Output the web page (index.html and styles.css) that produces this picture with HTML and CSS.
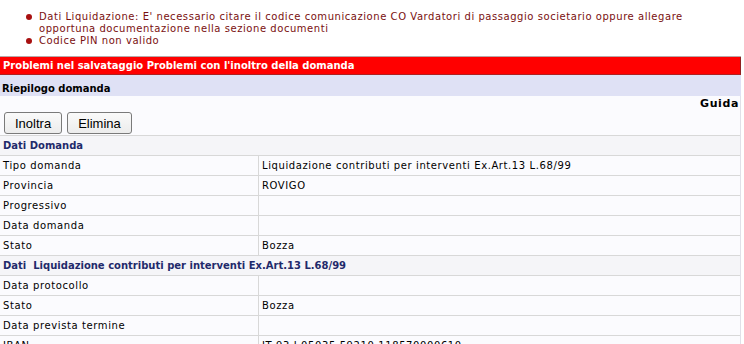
FILE: index.html
```html
<!DOCTYPE html>
<html lang="it">
<head>
    <meta charset="UTF-8">
    <title>Riepilogo domanda</title>
    <link rel="stylesheet" href="styles.css">
</head>
<body>

    <div class="messaggi">
        <ul>
            <li>Dati Liquidazione: E' necessario citare il codice comunicazione CO Vardatori di passaggio societario oppure allegare opportuna documentazione nella sezione documenti</li>
            <li>Codice PIN non valido</li>
        </ul>
    </div>

    <div class="errore">Problemi nel salvataggio Problemi con l'inoltro della domanda</div>

    <div class="titolo">Riepilogo domanda</div>

    <div class="contenuto">
        <div class="guida">Guida</div>
        <div class="pulsanti">
            <button class="btn">Inoltra</button>
            <button class="btn">Elimina</button>
        </div>

        <table class="riepilogo">
            <tr class="sezione"><td colspan="2">Dati Domanda</td></tr>
            <tr><td class="etichetta">Tipo domanda</td><td>Liquidazione contributi per interventi Ex.Art.13 L.68/99</td></tr>
            <tr><td class="etichetta">Provincia</td><td>ROVIGO</td></tr>
            <tr><td class="etichetta">Progressivo</td><td></td></tr>
            <tr><td class="etichetta">Data domanda</td><td></td></tr>
            <tr><td class="etichetta">Stato</td><td>Bozza</td></tr>
            <tr class="sezione"><td colspan="2">Dati&nbsp; Liquidazione contributi per interventi Ex.Art.13 L.68/99</td></tr>
            <tr><td class="etichetta">Data protocollo</td><td></td></tr>
            <tr><td class="etichetta">Stato</td><td>Bozza</td></tr>
            <tr><td class="etichetta">Data prevista termine</td><td></td></tr>
            <tr><td class="etichetta">IBAN</td><td>IT 93 I 05035 59210 118570000610</td></tr>
        </table>
    </div>

</body>
</html>
```

FILE: styles.css
```css
body {
    font-family: "DejaVu Sans", Verdana, sans-serif;
    font-size: 10px;
    margin: 0;
    padding: 0;
    background-color: #ffffff;
    width: 741px;
}
.messaggi {
    padding: 11px 0 9px;
    border-bottom: 1px solid #b8a8a8;
}
.messaggi ul {
    margin: 0;
    padding-left: 39px;
    list-style: none;
    color: #7a1010;
    line-height: 12px;
    letter-spacing: 0.55px;
}
.messaggi li::before {
    content: "";
    display: inline-block;
    width: 6px;
    height: 6px;
    margin: 0 7px 0 -13px;
    border-radius: 50%;
    background-color: #a81010;
    vertical-align: 0;
}
.errore {
    background-color: #ff0000;
    color: #ffffff;
    font-weight: bold;
    height: 17px;
    line-height: 17px;
    padding-left: 3px;
    border-bottom: 1px solid #b02020;
    border-right: 1px solid #902020;
}
.titolo {
    background-color: #dfe1f5;
    font-weight: bold;
    height: 18px;
    line-height: 21px;
    padding: 3px 0 0 2px;
}
.contenuto {
    background-color: #fbfbfe;
    border-right: 1px solid #e0e0e8;
}
.guida {
    text-align: right;
    font-weight: bold;
    font-size: 11px;
    letter-spacing: 0.6px;
    line-height: 15px;
    padding-right: 1px;
}
.pulsanti {
    display: flex;
    gap: 5px;
    padding: 1px 0 1px 4px;
}
.btn {
    font-family: "Liberation Sans", Arial, sans-serif;
    font-size: 13px;
    height: 22px;
    padding: 0 10px;
    background: linear-gradient(#fafafa, #ececec);
    border: 1px solid #7a7a7a;
    border-radius: 3px;
    color: #000000;
}
.riepilogo {
    width: 100%;
    border-collapse: collapse;
}
.riepilogo td {
    height: 19px;
    padding: 0 3px;
    border-top: 1px solid #d8d8d8;
    border-bottom: 1px solid #d8d8d8;
    color: #000000;
    letter-spacing: 0.6px;
}
.riepilogo td.etichetta {
    width: 252px;
    border-right: 1px solid #d8d8d8;
}
.sezione td {
    font-weight: bold;
    color: #1f2a6b;
    background-color: #f5f5f8;
    letter-spacing: 0;
}
```
